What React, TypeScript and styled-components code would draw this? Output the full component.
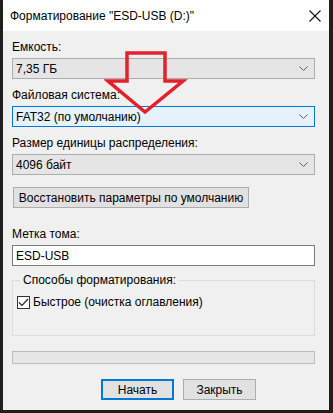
import React from 'react';
import styled, { createGlobalStyle } from 'styled-components';

const GlobalStyle = createGlobalStyle`
  html, body {
    margin: 0;
    padding: 0;
    background: #1f1f1f;
  }
  body {
    font-family: "Liberation Sans", Arial, sans-serif;
    font-size: 12px;
    color: #000;
  }
`;

const Screen = styled.div`
  width: 333px;
  height: 413px;
  position: relative;
  overflow: hidden;
  background: #1f1f1f;
`;

const Window = styled.div`
  margin-left: 3px;
  width: 326px;
  height: 410px;
  background: #f0f0f0;
  display: flex;
  flex-direction: column;
`;

const TitleBar = styled.div`
  height: 31px;
  background: #fff;
  display: flex;
  align-items: center;
  justify-content: space-between;
  padding: 0 6px 0 7px;
  box-sizing: border-box;
`;

const Title = styled.span`
  font-size: 12px;
  color: #000;
`;

const CloseIcon = styled.svg`
  width: 12px;
  height: 12px;
  margin-right: 2px;
`;

const Content = styled.div`
  padding: 9px 14px 0 9px;
  display: flex;
  flex-direction: column;
`;

const Label = styled.div<{ $mt?: number }>`
  height: 15px;
  line-height: 15px;
  margin-top: ${({ $mt }) => $mt ?? 0}px;
  margin-bottom: 3px;
`;

const Select = styled.div<{ $focused?: boolean }>`
  height: 21px;
  box-sizing: border-box;
  border: 1px solid ${({ $focused }) => ($focused ? '#0078d7' : '#adadad')};
  background: ${({ $focused }) => ($focused ? '#e5f1fb' : '#e5e5e5')};
  display: flex;
  align-items: center;
  justify-content: space-between;
  padding: 0 6px 0 3px;
`;

const Chevron = styled.svg`
  width: 9px;
  height: 5px;
`;

const Button = styled.div<{ $focused?: boolean; $w: number }>`
  width: ${({ $w }) => $w}px;
  height: 21px;
  box-sizing: border-box;
  border: ${({ $focused }) => ($focused ? '2px solid #0078d7' : '1px solid #adadad')};
  background: #e1e1e1;
  display: flex;
  align-items: center;
  justify-content: center;
`;

const ResetButton = styled(Button)`
  margin: 12px 0 0 1px;
`;

const Input = styled.div`
  height: 21px;
  box-sizing: border-box;
  border: 1px solid #7a7a7a;
  background: #fff;
  display: flex;
  align-items: center;
  padding: 0 3px;
`;

const GroupBox = styled.fieldset`
  margin: 7px 0 0 0;
  padding: 8px 0 0 4px;
  height: 63px;
  box-sizing: border-box;
  border: 1px solid #dcdcdc;
  min-width: 0;
`;

const Legend = styled.legend`
  padding: 0 3px;
  margin-left: 3px;
  font-size: 12px;
`;

const CheckRow = styled.label`
  display: flex;
  align-items: center;
  gap: 3px;
`;

const CheckBox = styled.span`
  width: 13px;
  height: 13px;
  box-sizing: border-box;
  border: 1px solid #333;
  background: #fff;
  display: flex;
  align-items: center;
  justify-content: center;
`;

const Progress = styled.div`
  margin-top: 15px;
  height: 13px;
  box-sizing: border-box;
  border: 1px solid #bcbcbc;
  background: #e6e6e6;
`;

const Footer = styled.div`
  margin-top: 15px;
  display: flex;
  justify-content: center;
  gap: 9px;
  padding-left: 30px;
`;

const Arrow = styled.svg`
  position: absolute;
  left: 104px;
  top: 49px;
  width: 84px;
  height: 68px;
`;

const ChevronDown = () => (
  <Chevron viewBox="0 0 9 5">
    <path d="M0.5 0.5 L4.5 4.5 L8.5 0.5" fill="none" stroke="#606060" strokeWidth="1" />
  </Chevron>
);

const App: React.FC = () => {
  return (
    <Screen>
      <GlobalStyle />
      <Window>
        <TitleBar>
          <Title>Форматирование "ESD-USB (D:)"</Title>
          <CloseIcon viewBox="0 0 12 12">
            <path d="M0.5 0.5 L11.5 11.5 M11.5 0.5 L0.5 11.5" stroke="#111" strokeWidth="1.1" />
          </CloseIcon>
        </TitleBar>
        <Content>
          <Label>Емкость:</Label>
          <Select>
            <span>7,35 ГБ</span>
            <ChevronDown />
          </Select>

          <Label $mt={9}>Файловая система:</Label>
          <Select $focused>
            <span>FAT32 (по умолчанию)</span>
            <ChevronDown />
          </Select>

          <Label $mt={9}>Размер единицы распределения:</Label>
          <Select>
            <span>4096 байт</span>
            <ChevronDown />
          </Select>

          <ResetButton $w={236}>Восстановить параметры по умолчанию</ResetButton>

          <Label $mt={19}>Метка тома:</Label>
          <Input>ESD-USB</Input>

          <GroupBox>
            <Legend>Способы форматирования:</Legend>
            <CheckRow>
              <CheckBox>
                <svg width="11" height="11" viewBox="0 0 11 11">
                  <path d="M1 5.5 L4 8.5 L10 2" fill="none" stroke="#222" strokeWidth="1.2" />
                </svg>
              </CheckBox>
              Быстрое (очистка оглавления)
            </CheckRow>
          </GroupBox>

          <Progress />

          <Footer>
            <Button $focused $w={73}>Начать</Button>
            <Button $w={73}>Закрыть</Button>
          </Footer>
        </Content>
      </Window>
      <Arrow viewBox="104 49 84 68">
        <path
          d="M127 53 L165 53 L165 81 L183 81 L145 112 L108 81 L127 81 Z"
          fill="none"
          stroke="#e5202b"
          strokeWidth="3.5"
          strokeLinejoin="miter"
        />
      </Arrow>
    </Screen>
  );
};

export default App;
